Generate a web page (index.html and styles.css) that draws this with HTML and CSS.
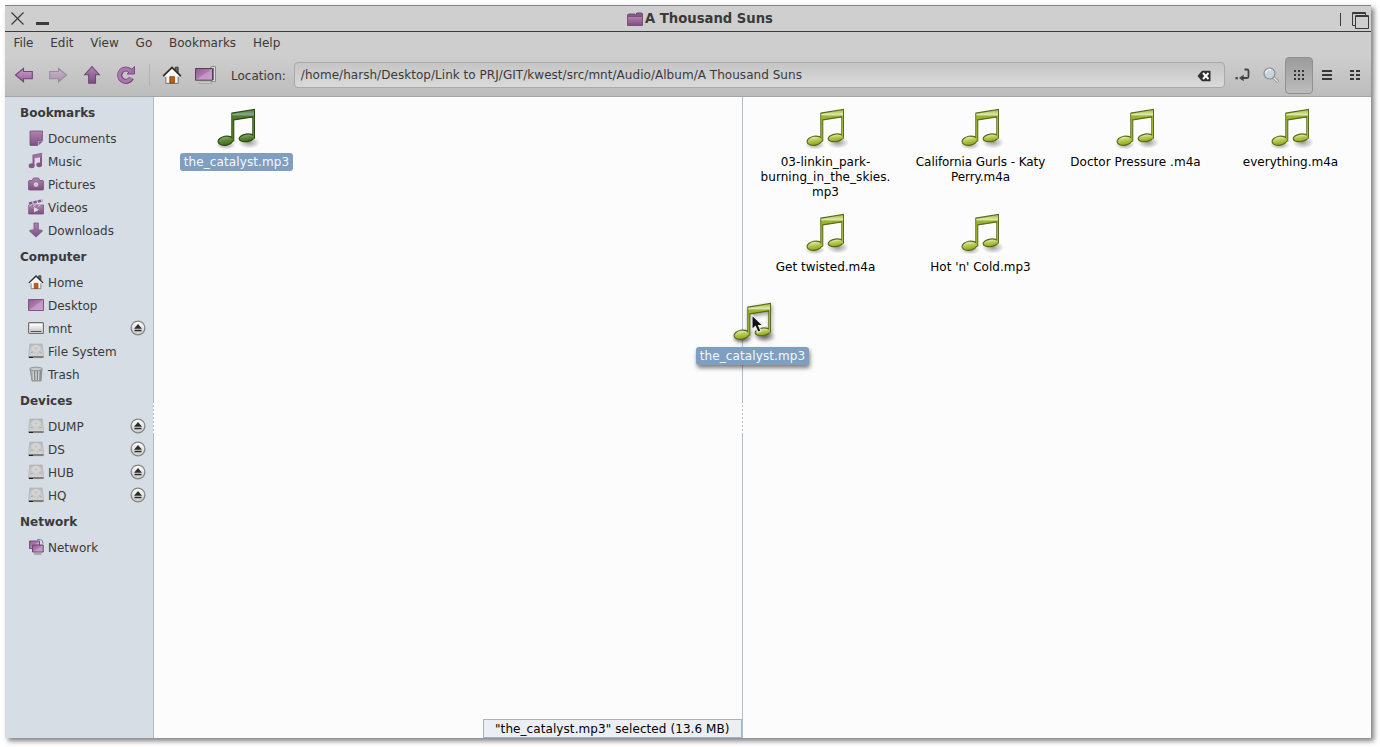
FILE: index.html
```html
<!DOCTYPE html>
<html lang="en">
<head>
<meta charset="utf-8">
<title>A Thousand Suns</title>
<link rel="stylesheet" href="styles.css">
</head>
<body>
<svg class="sprite" width="0" height="0" aria-hidden="true">
  <defs>
    <linearGradient id="purple" x1="0" y1="0" x2="0" y2="1"><stop offset="0" stop-color="#b483b2"/><stop offset="1" stop-color="#7a5080"/></linearGradient>
    <linearGradient id="screen" x1="0" y1="0" x2="1" y2="1"><stop offset="0" stop-color="#8d5c91"/><stop offset=".48" stop-color="#b079b0"/><stop offset=".52" stop-color="#c394c4"/><stop offset="1" stop-color="#cf9fd0"/></linearGradient>
    <linearGradient id="arrow" x1="0" y1="0" x2="0" y2="1"><stop offset="0" stop-color="#cf9fd0"/><stop offset="1" stop-color="#935f98"/></linearGradient>
    <linearGradient id="green" x1="0" y1="0" x2="0" y2="1"><stop offset="0" stop-color="#a3bb3c"/><stop offset=".14" stop-color="#dde9ac"/><stop offset=".2" stop-color="#9ab530"/><stop offset="1" stop-color="#a9bf3c"/></linearGradient>
    <linearGradient id="head" x1="0" y1="0" x2="0" y2="1"><stop offset="0" stop-color="#e9f0bb"/><stop offset=".5" stop-color="#b1c746"/><stop offset="1" stop-color="#8ba61c"/></linearGradient>
    <linearGradient id="greenDark" x1="0" y1="0" x2="0" y2="1"><stop offset="0" stop-color="#55812c"/><stop offset=".14" stop-color="#86a891"/><stop offset=".2" stop-color="#4f7e27"/><stop offset="1" stop-color="#5b882f"/></linearGradient>
    <linearGradient id="headDark" x1="0" y1="0" x2="0" y2="1"><stop offset="0" stop-color="#86ab91"/><stop offset=".5" stop-color="#5b882f"/><stop offset="1" stop-color="#437016"/></linearGradient>
    <linearGradient id="metal" x1="0" y1="0" x2="0" y2="1"><stop offset="0" stop-color="#fff"/><stop offset="1" stop-color="#c9c9c9"/></linearGradient>
    <linearGradient id="disk" x1="0" y1="0" x2="0" y2="1"><stop offset="0" stop-color="#b8b8b8"/><stop offset="1" stop-color="#d6d6d6"/></linearGradient>
    <radialGradient id="shade"><stop offset="0" stop-color="#000" stop-opacity=".38"/><stop offset="1" stop-color="#000" stop-opacity="0"/></radialGradient>
  </defs>
  <symbol id="i-note" viewBox="0 0 48 48">
    <ellipse cx="13" cy="41" rx="10" ry="4.500" fill="url(#shade)"/><ellipse cx="36" cy="38.500" rx="11" ry="6" fill="url(#shade)"/>
    <path d="M18.900 9.200 41.400 5.500V34H39.900V12.900L20.700 15.900V37H18.900Z" fill="#5b691b" stroke="#5b691b" stroke-width="1.200"/>
    <ellipse cx="12.600" cy="36.700" rx="7.600" ry="4.500" transform="rotate(-10 12.600 36.700)" fill="url(#head)" stroke="#5b691b" stroke-width="1.200"/>
    <ellipse cx="33.700" cy="33.800" rx="7.600" ry="3.800" transform="rotate(-8 33.700 33.800)" fill="url(#head)" stroke="#5b691b" stroke-width="1.200"/>
    <path d="M19.200 9.700 41 6.100V34.500H40V12.200L20.300 15.300V37H19.200Z" fill="url(#green)"/>
  </symbol>
  <symbol id="i-note-dark" viewBox="0 0 48 48">
    <ellipse cx="13" cy="41" rx="10" ry="4.500" fill="url(#shade)"/><ellipse cx="36" cy="38.500" rx="11" ry="6" fill="url(#shade)"/>
    <path d="M18.900 9.200 41.400 5.500V34H39.900V12.900L20.700 15.900V37H18.900Z" fill="#2d4812" stroke="#2d4812" stroke-width="1.200"/>
    <ellipse cx="12.600" cy="36.700" rx="7.600" ry="4.500" transform="rotate(-10 12.600 36.700)" fill="url(#headDark)" stroke="#2d4812" stroke-width="1.200"/>
    <ellipse cx="33.700" cy="33.800" rx="7.600" ry="3.800" transform="rotate(-8 33.700 33.800)" fill="url(#headDark)" stroke="#2d4812" stroke-width="1.200"/>
    <path d="M19.200 9.700 41 6.100V34.500H40V12.200L20.300 15.300V37H19.200Z" fill="url(#greenDark)"/>
  </symbol>
  <symbol id="i-home" viewBox="0 0 18 18">
    <path d="M12 2h2.500v5L12 5Z" fill="#666" stroke="#333" stroke-width=".8"/>
    <path d="M3.500 8.500 9 3.500l5.500 5V16.500h-11Z" fill="#f4f4f4" stroke="#666" stroke-width=".8"/>
    <path d="M1 10 9 2.200 17 10" fill="none" stroke="#2e2e2e" stroke-width="1.500"/>
    <path d="M3 10.400 9 4.600l6 5.800" fill="none" stroke="#fff" stroke-width="1.300"/>
    <path d="M7 10.500h4.200v5.800H7Z" fill="#c85c05" stroke="#80420c" stroke-width=".7"/>
  </symbol>
  <symbol id="i-disk" viewBox="0 0 16 16">
    <path d="M1.800 1h12.400L15.500 11v3.700H.7V11Z" fill="url(#disk)" stroke="#b0b0b0" stroke-width=".6"/>
    <ellipse cx="8" cy="5.500" rx="4.800" ry="3.700" fill="#d3d3d3"/><circle cx="8" cy="5.500" r="1" fill="#c0c0c0"/>
    <path d="M2.500 10 5 8.900M13.500 10 11 8.600" stroke="#b0b0b0"/>
    <path d="M.7 13h14.800v2H.7Z" fill="#808080"/><path d="M1 14.500h4" stroke="#222"/>
  </symbol>
  <symbol id="i-eject" viewBox="0 0 16 16">
    <circle cx="8" cy="8" r="6.900" fill="url(#metal)" stroke="#858585" stroke-width="1.300"/>
    <path d="M8 4 12 8.700H4ZM4.500 9.700h7v1.600h-7Z" fill="#2c2c2c"/>
  </symbol>
  <symbol id="i-arrow" viewBox="0 0 20 18">
    <path d="M1.500 9 9.500 2.500V5.500h8.800v7.200H9.500v3Z" fill="url(#arrow)" stroke="#70477a" stroke-width="1.100"/>
  </symbol>
</svg>

<div class="window">
  <header class="chrome">
    <div class="titlebar">
      <svg class="win-left" width="40" height="26" viewBox="0 0 40 26"><path d="M6.500 6.500 18.500 18.500M18.500 6.500 6.500 18.500" stroke="#3b3b3b" stroke-width="1.200"/><path d="M31 16h13v3H31Z" fill="#3b3b3b"/></svg>
      <div class="title">
        <svg width="18" height="16" viewBox="0 0 18 16"><path d="M1.500 14V4l1-1h6l1.200 1 1-2h5l.8 1v11Z" fill="#85588a" stroke="#75477b"/><path d="M1.500 5.500h15V14.500h-15Z" fill="url(#purple)" stroke="#7b4e80"/></svg>
        <span>A Thousand Suns</span>
      </div>
      <svg class="win-right" width="34" height="26" viewBox="0 0 34 26"><g fill="none" stroke="#3b3b3b"><path d="M3.500 7v13M18 19.500h-2.500V6.500h13V9M15 7.500h14"/><path d="M18.500 9.500h13v13h-13ZM18 10.500h14"/></g></svg>
    </div>
    <nav class="menubar"><span>File</span><span>Edit</span><span>View</span><span>Go</span><span>Bookmarks</span><span>Help</span></nav>
    <div class="toolbar">
      <div class="nav-tools">
        <svg width="20" height="18"><use href="#i-arrow"/></svg>
        <svg class="forward" width="20" height="18"><use href="#i-arrow"/></svg>
        <svg width="20" height="20" viewBox="0 0 20 20"><path d="M10 1.500 17.300 9.700H13.500V18.300H6.700V9.700H2.700Z" fill="url(#purple)" stroke="#70477a" stroke-width="1.100"/></svg>
        <svg width="20" height="20" viewBox="0 0 20 20"><path d="M14.500 6A6.200 6.200 0 1 0 15.500 13" fill="none" stroke="#784a7e" stroke-width="5.200"/><path d="M18.500 1.500V9H11Z" fill="#a26ea5" stroke="#784a7e"/><path d="M14.500 6.200A6.200 6.200 0 1 0 15.300 12.600" fill="none" stroke="#ab78ad" stroke-width="3.200"/></svg>
      </div>
      <i class="separator"></i>
      <svg class="home" width="20" height="20"><use href="#i-home"/></svg>
      <svg class="computer" width="24" height="20" viewBox="0 0 24 20"><path d="M17 1.500h4.500v15H17Z" fill="#ddd" stroke="#8c8c8c"/><path d="M19.500 3v12" stroke="#777"/><path d="M6 17h10l2 1.500H5Z" fill="#eee" stroke="#aaa"/><path d="M1.500 3.500h17v11.700h-17Z" fill="url(#screen)" stroke="#514255"/></svg>
      <span class="location-label">Location:</span>
      <div class="location"><span>/home/harsh/Desktop/Link to PRJ/GIT/kwest/src/mnt/Audio/Album/A Thousand Suns</span>
        <svg width="14" height="12" viewBox="0 0 14 12"><path d="M.5 6 5 .8H13.500V11.200H5Z" fill="#303030"/><path d="M6 3 11.500 9M11.500 3 6 9" stroke="#fff" stroke-width="1.900"/></svg>
      </div>
      <div class="view-tools">
        <svg width="16" height="16" viewBox="0 0 16 16"><path d="M9.500 2.500h2.500q1.500 0 1.500 1.500v5.500q0 1.500-1.500 1.500H7" fill="none" stroke="#444" stroke-width="1.800"/><path d="M4 11 8.700 7.800V14.200Z" fill="#444"/><path d="M.5 10h2.300v2.300H.5Z" fill="#444"/></svg>
        <svg width="18" height="18" viewBox="0 0 18 18"><path d="m11 11 5 5" stroke="#888" stroke-width="3"/><path d="m11 11 4.800 4.800" stroke="#eee" stroke-width="1.300"/><circle cx="7.500" cy="7.500" r="5.500" fill="#c6d5e2" stroke="#8e8e8e" stroke-width="1.200"/><path d="M4 7a3.500 3.500 0 0 1 5-3" stroke="#f0f5fa" fill="none" stroke-width="1.500"/></svg>
        <span class="active"><svg width="12" height="12" viewBox="0 0 12 12"><path d="M1 1h2v2H1zm4 0h2v2H5zm4 0h2v2H9zM1 5h2v2H1zm4 0h2v2H5zm4 0h2v2H9zM1 9h2v2H1zm4 0h2v2H5zm4 0h2v2H9z" fill="#383838"/></svg></span>
        <svg class="list" width="12" height="12" viewBox="0 0 12 12"><path d="M1 1h10v2H1zm0 4h10v2H1zm0 4h10v2H1z" fill="#383838"/></svg>
        <svg class="compact" width="12" height="12" viewBox="0 0 12 12"><path d="M1 1h4v2H1zm6 0h4v2H7zM1 5h4v2H1zm6 0h4v2H7zM1 9h4v2H1zm6 0h4v2H7z" fill="#383838"/></svg>
      </div>
    </div>
  </header>

  <main class="content">
    <aside class="sidebar">
      <h2>Bookmarks</h2>
      <div class="place"><svg width="16" height="16" viewBox="0 0 16 16"><path d="M2 1h12.500v9.500h-5v5H2Z" fill="url(#purple)" stroke="#79507e" stroke-width=".8"/><path d="M10.500 11.300H15L10.500 15.500Z" fill="#8b6090"/></svg><span>Documents</span></div>
      <div class="place"><svg width="16" height="16" viewBox="0 0 16 16"><path d="M5.500 13V2.500L13 1v11" fill="none" stroke="#855a8a" stroke-width="2"/><path d="M5.500 1.900 13.500.5v3.500L5.500 5.500Z" fill="#a071a2"/><ellipse cx="3.600" cy="12.800" rx="3" ry="2.500" fill="#825787"/><ellipse cx="11.200" cy="11.800" rx="2.900" ry="2.400" fill="#825787"/></svg><span>Music</span></div>
      <div class="place"><svg width="16" height="16" viewBox="0 0 16 16"><path d="M1 4.500h3L5.500 2h5L12 4.500h3l.5 1V13l-.5 1H1l-.5-1V5.500Z" fill="url(#purple)" stroke="#79507e" stroke-width=".8"/><circle cx="8" cy="8.500" r="2.700" fill="#d6dde5" stroke="#79507e" stroke-width=".6"/><circle cx="8" cy="8.500" r="1" fill="#c3b4c9"/></svg><span>Pictures</span></div>
      <div class="place"><svg width="16" height="16" viewBox="0 0 16 16"><path d="M.7 6h14.800v9H.7Z" fill="url(#purple)" stroke="#79507e" stroke-width=".8"/><path d="M1 4.500 14.500 1.500" stroke="#85588a" stroke-width="2.700" stroke-dasharray="3.500 1"/><path d="m1 7.200 3-1.500M5 7.200 8 5.700M10 7.200l3-1.500" stroke="#d7c8dc"/><path d="m6 8 5 2.700L6 13.500Z" fill="#d6dde5"/></svg><span>Videos</span></div>
      <div class="place"><svg width="16" height="16" viewBox="0 0 16 16"><path d="M6 1h4.300v7h3.200l1 1-6.500 6-6.500-6 1-1H6Z" fill="url(#purple)" stroke="#79507e" stroke-width=".8"/></svg><span>Downloads</span></div>
      <h2>Computer</h2>
      <div class="place"><svg width="16" height="16"><use href="#i-home"/></svg><span>Home</span></div>
      <div class="place"><svg width="16" height="16" viewBox="0 0 16 16"><path d="M.5 2.500h15v11H.5Z" fill="url(#screen)" stroke="#7e5682"/></svg><span>Desktop</span></div>
      <div class="place"><svg width="16" height="16" viewBox="0 0 16 16"><rect x=".6" y="2.600" width="14.800" height="10.800" rx="1" fill="#eee" stroke="#707070" stroke-width="1.200"/><path d="M2 4h12v7H2Z" fill="url(#metal)"/><path d="M2.500 11.500h11" stroke="#555"/></svg><span>mnt</span><svg class="eject" width="16" height="16"><use href="#i-eject"/></svg></div>
      <div class="place"><svg width="16" height="16"><use href="#i-disk"/></svg><span>File System</span></div>
      <div class="place"><svg width="16" height="16" viewBox="0 0 16 16"><path d="M2 3h12l-1 12H4Z" fill="#a4a9ad" stroke="#84888b" stroke-width=".8"/><path d="m5 4 .5 10M8 4v10M11 4l-.5 10" stroke="#d8d8d8"/><path d="m6.500 4 .3 10M9.700 4l-.2 10M12.500 4 12 14" stroke="#777" stroke-width=".7"/><ellipse cx="8" cy="3" rx="6.300" ry="1.800" fill="#c6c9cb" stroke="#909497"/></svg><span>Trash</span></div>
      <h2>Devices</h2>
      <div class="place"><svg width="16" height="16"><use href="#i-disk"/></svg><span>DUMP</span><svg class="eject" width="16" height="16"><use href="#i-eject"/></svg></div>
      <div class="place"><svg width="16" height="16"><use href="#i-disk"/></svg><span>DS</span><svg class="eject" width="16" height="16"><use href="#i-eject"/></svg></div>
      <div class="place"><svg width="16" height="16"><use href="#i-disk"/></svg><span>HUB</span><svg class="eject" width="16" height="16"><use href="#i-eject"/></svg></div>
      <div class="place"><svg width="16" height="16"><use href="#i-disk"/></svg><span>HQ</span><svg class="eject" width="16" height="16"><use href="#i-eject"/></svg></div>
      <h2>Network</h2>
      <div class="place"><svg width="16" height="16" viewBox="0 0 16 16"><path d="M9 .7h3.500q2.500 0 2.500 4" fill="none" stroke="#6581a5"/><path d="M1.500 2h10v7.500h-10Z" fill="url(#screen)" stroke="#795080"/><path d="M4.500 6h10.700v7H4.500Z" fill="url(#screen)" stroke="#674870"/><path d="M6 15h7.500" stroke="#777"/></svg><span>Network</span></div>
      <i class="grip"></i>
    </aside>
    <section class="pane pane-left">
      <div class="files">
        <figure class="file selected"><svg width="48" height="48"><use href="#i-note-dark"/></svg><figcaption>the_catalyst.mp3</figcaption></figure>
      </div>
      <div class="status">"the_catalyst.mp3" selected (13.6 MB)</div>
      <i class="grip"></i>
    </section>
    <section class="pane">
      <div class="files">
        <figure class="file"><svg width="48" height="48"><use href="#i-note"/></svg><figcaption class="wide">03-linkin_park-<br>burning_in_the_skies.<br>mp3</figcaption></figure>
        <figure class="file"><svg width="48" height="48"><use href="#i-note"/></svg><figcaption class="tight">California Gurls - Katy<br>Perry.m4a</figcaption></figure>
        <figure class="file"><svg width="48" height="48"><use href="#i-note"/></svg><figcaption class="wide">Doctor Pressure .m4a</figcaption></figure>
        <figure class="file"><svg width="48" height="48"><use href="#i-note"/></svg><figcaption>everything.m4a</figcaption></figure>
        <figure class="file"><svg width="48" height="48"><use href="#i-note"/></svg><figcaption>Get twisted.m4a</figcaption></figure>
        <figure class="file"><svg width="48" height="48"><use href="#i-note"/></svg><figcaption>Hot 'n' Cold.mp3</figcaption></figure>
      </div>
    </section>
  </main>
</div>

<div class="drag">
  <figure class="file selected"><svg width="48" height="48"><use href="#i-note"/></svg><figcaption>the_catalyst.mp3</figcaption></figure>
  <svg class="pointer" width="13" height="20" viewBox="0 0 13 20"><path d="M1 1V15.500L4.400 12.500 7 18.300 10 17 7.500 11.500H12Z" fill="#111" stroke="#eee" stroke-width="1.100"/></svg>
</div>
</body>
</html>
```

FILE: styles.css
```css
* { box-sizing: border-box; }
body {
  margin: 0;
  padding: 5px 9px 9px 5px;
  height: 747px;
  overflow: hidden;
  background: #fff;
  color: #3a3a3a;
  font: 12px/15px "DejaVu Sans", sans-serif;
}
svg { display: block; flex: none; }
.sprite { position: absolute; }

.window {
  display: flex;
  flex-direction: column;
  height: 733px;
  background: #fcfcfc;
  box-shadow: 3px 3px 5px rgba(0, 0, 0, .5);
}
.chrome {
  height: 92px;
  background: linear-gradient(#cfcfcf 0, #cecece 50px, #bcbcbc 100%);
  border-top: 1px solid #858585;
  border-bottom: 1px solid #a5a5a5;
}
.titlebar {
  display: flex;
  align-items: center;
  justify-content: space-between;
  height: 26px;
  border-bottom: 1px solid #3b3b3b;
}
.win-left { overflow: visible; }
.title {
  display: flex;
  align-items: center;
  gap: 1px;
  padding-left: 17px;
  font-size: 13.2px;
  font-weight: bold;
}
.menubar { display: flex; gap: 16.8px; padding: 4px 0 0 8.4px; height: 21px; }

.toolbar { display: flex; align-items: center; height: 44px; }
.nav-tools { display: flex; align-items: center; gap: 14px; margin-left: 9px; }
.forward { transform: scaleX(-1); opacity: .48; }
.separator { width: 1px; height: 22px; margin-left: 13px; background: #b3b3b3; }
.home { margin-left: 12px; }
.computer { margin-left: 12px; }
.location-label { margin-left: 13px; padding-top: 2px; }
.location {
  display: flex;
  align-items: center;
  justify-content: space-between;
  width: 931px;
  height: 26px;
  margin-left: 8px;
  padding: 1px 13px 0 6px;
  border: 1px solid #a9a9a9;
  border-radius: 4px;
  background: linear-gradient(#c5c5c5, #dadada);
  letter-spacing: .04px;
}
.location svg { margin-top: 1px; }
.view-tools { display: flex; align-items: center; margin-left: 10px; }
.view-tools > svg:nth-child(2) { margin-left: 11px; }
.active {
  display: grid;
  place-items: center;
  width: 28px;
  height: 37px;
  margin-left: 5px;
  border: 1px solid #909090;
  border-radius: 4px;
  background: linear-gradient(#9c9c9c, #bcbcbc);
}
.list { margin-left: 8px; }
.compact { margin-left: 16px; }

.content { display: flex; flex: 1; min-height: 0; }
.sidebar {
  position: relative;
  width: 149px;
  background: #d6dde5;
  border-right: 1px solid #b3bcc6;
}
.sidebar h2 {
  margin: 0;
  padding-left: 15px;
  font-size: 12px;
  line-height: 32px;
  height: 29px;
}
.place { display: flex; align-items: center; gap: 4px; height: 23px; padding: 0 7px 0 23px; }
.place span { padding-top: 3px; }
.eject { margin-left: auto; }

.pane { position: relative; display: flex; flex-direction: column; flex: 1; }
.pane-left { flex: none; width: 589px; border-right: 1px solid #afbecd; }
.grip {
  position: absolute;
  top: 306px;
  right: -1px;
  width: 1px;
  height: 30px;
  background: repeating-linear-gradient(#fff 0 2px, #afbecd 2px 4px);
}
.files {
  display: grid;
  grid-template-columns: repeat(auto-fill, 155px);
  grid-auto-rows: 105px;
  padding: 7px 0 0 5px;
}
.file {
  display: flex;
  flex-direction: column;
  align-items: center;
  margin: 0;
  color: #000;
  text-align: center;
}
.file figcaption { padding: 3px 4px 0; white-space: nowrap; }
.file .tight { letter-spacing: -.07px; }
.file .wide { letter-spacing: .05px; }
.selected figcaption {
  margin-top: 1px;
  padding: 2px 4px 1px;
  border-radius: 3px;
  background: #7e9fc0;
  color: #f5f8fb;
  letter-spacing: .1px;
}
.status {
  align-self: flex-end;
  width: 259px;
  height: 19px;
  margin-top: auto;
  padding: 2px 0 0 11px;
  border: 1px solid #a3b3c4;
  background: #ebeff4;
  color: #000;
  letter-spacing: .08px;
}

.drag { position: absolute; left: 696px; top: 298px; width: 113px; }
.drag figcaption { box-shadow: 1px 3px 4px rgba(0, 0, 0, .5); }
.drag .file > svg { filter: drop-shadow(1px 2px 2px rgba(0, 0, 0, .4)); }
.pointer { position: absolute; left: 55px; top: 16px; }
```
